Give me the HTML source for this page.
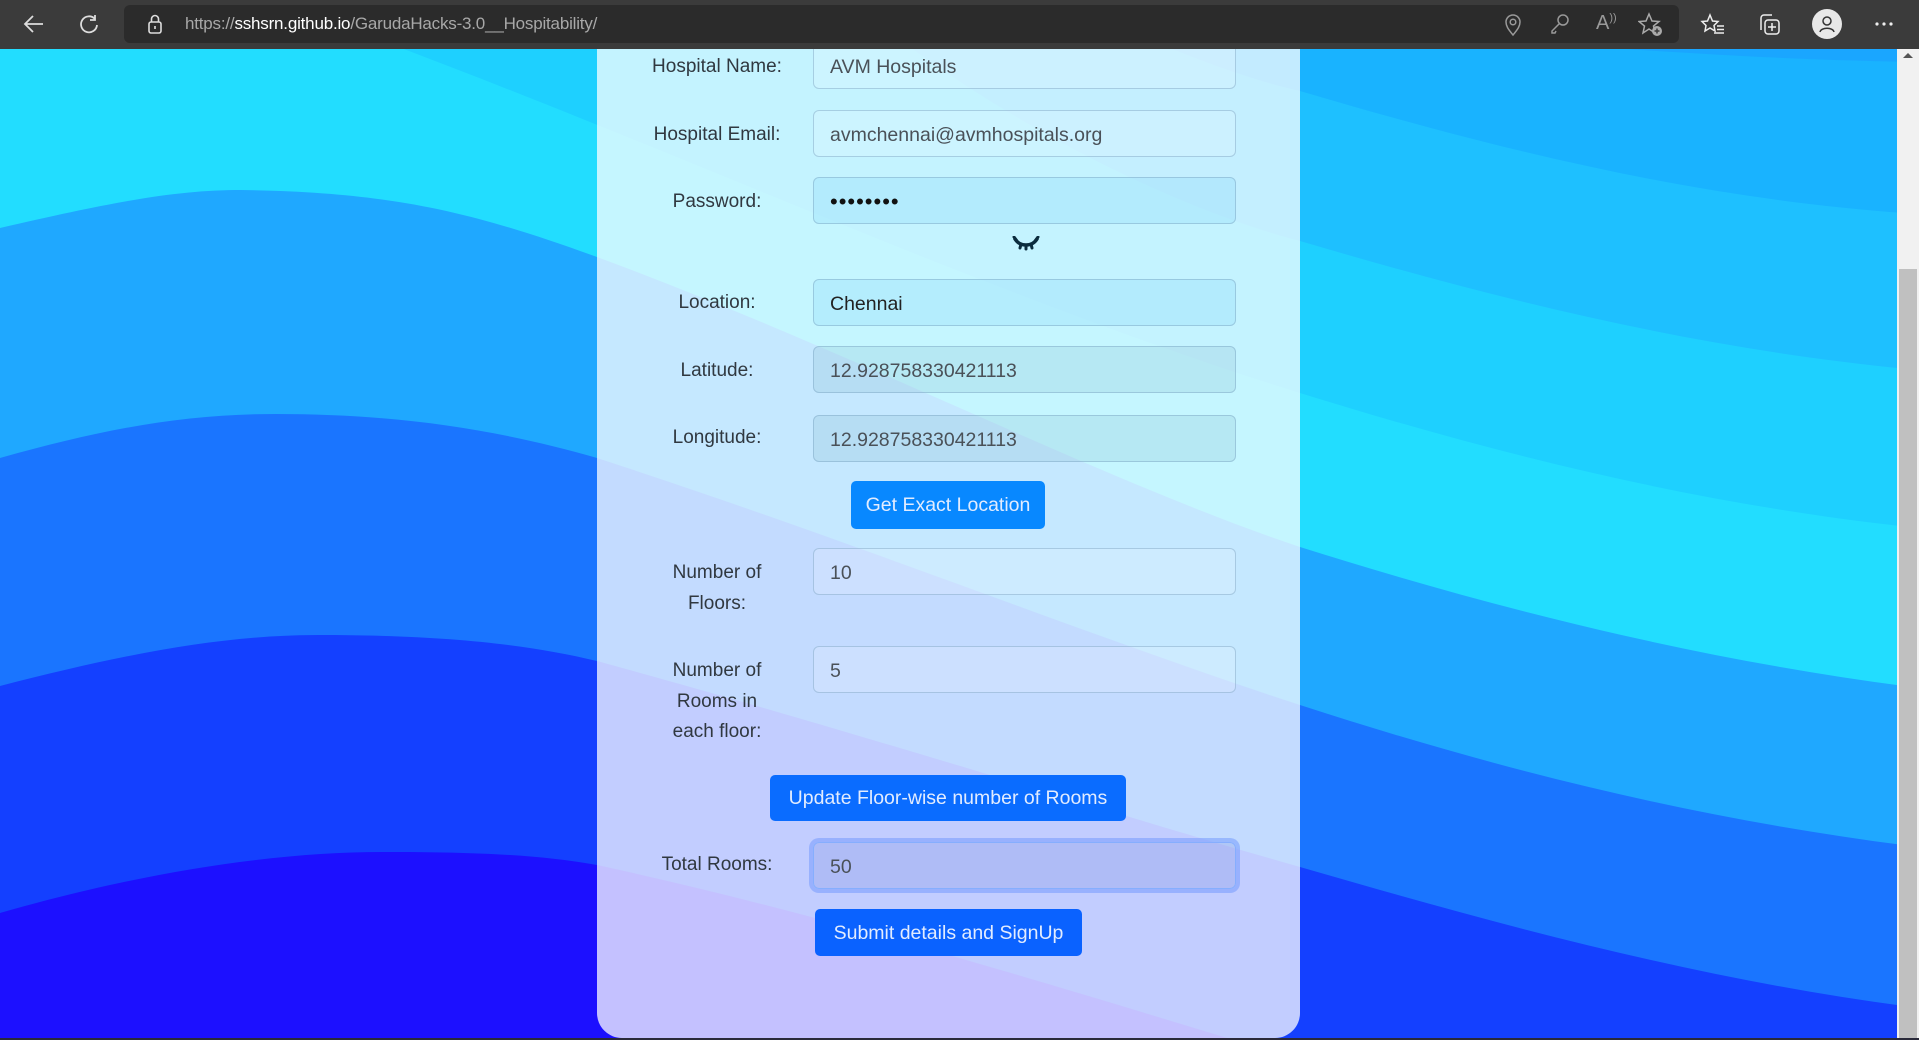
<!DOCTYPE html>
<html><head><meta charset="utf-8"><style>
*{margin:0;padding:0;box-sizing:border-box}
html,body{width:1919px;height:1040px;overflow:hidden;font-family:"Liberation Sans",sans-serif;position:relative}
#bar{position:absolute;left:0;top:0;width:1919px;height:49px;background:#3b3b3b}
#addr{position:absolute;left:124px;top:5px;width:1555px;height:38px;background:#2b2b2b;border-radius:6px}
#url{position:absolute;left:185px;top:14px;font-size:17px;color:#a8a8a8;letter-spacing:-0.2px}
#url b{font-weight:normal;color:#fff}
#bg{position:absolute;left:0;top:49px;display:block}
#card{position:absolute;left:597px;top:0;width:703px;height:1038px;background:rgba(255,255,255,0.74);border-radius:0 0 25px 25px}
.lbl{position:absolute;width:240px;left:597px;text-align:center;font-size:19px;line-height:30.5px;color:#303840}
.inp{position:absolute;left:813px;width:423px;height:47px;border:1px solid rgba(120,160,190,0.45);border-radius:6px;background:rgba(255,255,255,0.15);font-size:19.5px;color:#4a5158;padding-left:16px;line-height:48px}
.auto{background:rgba(150,220,250,0.35)}
.dis{background:rgba(130,180,200,0.22)}
.btn{position:absolute;border-radius:5px;color:#e2ecff;font-size:19.5px;text-align:center;line-height:48px}
#sb{position:absolute;left:1897px;top:49px;width:22px;height:991px;background:#f1f1f1}
#thumb{position:absolute;left:1899px;top:269px;width:18px;height:769px;background:#c0c0c0}
</style></head><body>
<svg id="bg" width="1919" height="991" viewBox="0 49 1919 991">
<rect x="0" y="0" width="1919" height="1100" fill="#1c10ff"/>
<path d="M0,913 C150,870 280,852 383,852 C480,852 540,855 597,865 C850,920 1100,1000 1300,1060 L1919,1200 L1919,0 L0,0Z" fill="#1440ff"/>
<path d="M0,686 C120,655 220,635 318,635 C450,635 530,645 597,661 C850,730 1100,810 1300,867 C1500,925 1700,980 1919,1008 L1919,0 L0,0Z" fill="#1a75ff"/>
<path d="M0,458 C100,430 180,414 276,414 C400,414 500,430 597,458 C850,540 1100,640 1300,705 C1500,770 1700,820 1919,847 L1919,0 L0,0Z" fill="#1fa8ff"/>
<path d="M0,228 C120,200 180,190 241,190 C400,192 480,215 597,257 C850,350 1100,480 1300,547 C1500,610 1700,660 1919,688 L1919,0 L0,0Z" fill="#22ddff"/>
<path d="M380,40 C700,160 1000,300 1300,393 C1500,455 1700,505 1919,528 L1919,0 L380,0Z" fill="#1ed0ff"/>
<path d="M900,40 C1050,150 1200,215 1300,241 C1500,300 1700,350 1919,370 L1919,0 L900,0Z" fill="#1ec0ff"/>
<path d="M1150,40 C1200,60 1250,80 1300,91 C1500,150 1700,200 1919,214 L1919,0 L1150,0Z" fill="#19b3ff"/>
<path d="M1500,40 C1700,55 1800,60 1919,62 L1919,0 L1500,0Z" fill="#1aa6ff"/>
</svg>
<div id="card"></div>

<div class="lbl" style="top:52px">Hospital Name:</div>
<div class="inp" style="top:42px;height:47px">AVM Hospitals</div>
<div class="lbl" style="top:120px">Hospital Email:</div>
<div class="inp" style="top:110px">avmchennai@avmhospitals.org</div>
<div class="lbl" style="top:187px">Password:</div>
<div class="inp auto" style="top:177px;color:#111;font-size:22px;letter-spacing:1px">&#8226;&#8226;&#8226;&#8226;&#8226;&#8226;&#8226;&#8226;</div>
<svg style="position:absolute;left:1012px;top:236px" width="28" height="16" viewBox="0 0 28 16">
<path d="M3,3 C8,11 20,11 25,3" stroke="#0b2c3e" stroke-width="3.5" fill="none" stroke-linecap="round"/>
<path d="M2,1 L5,5 M26,1 L23,5 M9,8 L8,12 M14,9 L14,13 M19,8 L20,12" stroke="#0b2c3e" stroke-width="3" stroke-linecap="round"/>
</svg>
<div class="lbl" style="top:288px">Location:</div>
<div class="inp auto" style="top:279px;color:#222">Chennai</div>
<div class="lbl" style="top:356px">Latitude:</div>
<div class="inp dis" style="top:346px">12.928758330421113</div>
<div class="lbl" style="top:423px">Longitude:</div>
<div class="inp dis" style="top:415px">12.928758330421113</div>
<div class="btn" style="left:851px;top:481px;width:194px;height:48px;background:#0888ff">Get Exact Location</div>
<div class="lbl" style="top:558px">Number of<br>Floors:</div>
<div class="inp" style="top:548px">10</div>
<div class="lbl" style="top:656px">Number of<br>Rooms in<br>each floor:</div>
<div class="inp" style="top:646px">5</div>
<div class="btn" style="left:770px;top:775px;width:356px;height:46px;line-height:46px;background:#0a6cff">Update Floor-wise number of Rooms</div>
<div class="lbl" style="top:850px">Total Rooms:</div>
<div class="inp" style="top:842px;background:rgba(120,140,220,0.25);border-color:#86aefe;box-shadow:0 0 0 4px rgba(110,150,253,0.5)">50</div>
<div class="btn" style="left:815px;top:909px;width:267px;height:47px;background:#0a62ff">Submit details and SignUp</div>

<div id="sb"></div><div id="thumb"></div>
<div style="position:absolute;left:1903px;top:53px;width:0;height:0;border-left:5px solid transparent;border-right:5px solid transparent;border-bottom:5px solid #555"></div>
<div style="position:absolute;left:0;top:1038px;width:1919px;height:2px;background:#2a2a3a"></div>

<div id="bar"><div id="addr"></div>
<svg style="position:absolute;left:22px;top:13px" width="24" height="22" viewBox="0 0 24 22"><path d="M21,11 H3 M11,3 L3,11 L11,19" stroke="#ddd" stroke-width="1.8" fill="none"/></svg>
<svg style="position:absolute;left:77px;top:12px" width="24" height="24" viewBox="0 0 24 24"><path d="M18,7 A8,8 0 1 0 20,13 M18,3 V8 H13" stroke="#ddd" stroke-width="1.8" fill="none"/></svg>
<svg style="position:absolute;left:146px;top:13px" width="18" height="22" viewBox="0 0 18 22"><rect x="3" y="9" width="12" height="11" rx="2" stroke="#ddd" stroke-width="1.6" fill="none"/><path d="M5.5,9 V6 A3.5,3.5 0 0 1 12.5,6 V9" stroke="#ddd" stroke-width="1.6" fill="none"/><rect x="8.2" y="13" width="1.6" height="3" fill="#ddd"/></svg>
<div id="url">https://<b>sshsrn.github.io</b>/GarudaHacks-3.0__Hospitability/</div>
<svg style="position:absolute;left:1502px;top:13px" width="22" height="24" viewBox="0 0 22 24"><path d="M11,22 C6,16 4,13 4,9 A7,7 0 0 1 18,9 C18,13 16,16 11,22Z" stroke="#999" stroke-width="1.5" fill="none"/><circle cx="11" cy="9" r="2.8" stroke="#999" stroke-width="1.5" fill="none"/></svg>
<svg style="position:absolute;left:1549px;top:13px" width="22" height="22" viewBox="0 0 22 22"><circle cx="14" cy="7" r="5" stroke="#999" stroke-width="1.5" fill="none"/><path d="M10,11 L3,18 L3,20 L6,20 L7,18" stroke="#999" stroke-width="1.5" fill="none"/></svg>
<div style="position:absolute;left:1596px;top:12px;color:#999;font-size:20px">A<span style="font-size:11px;vertical-align:top">))</span></div>
<svg style="position:absolute;left:1638px;top:12px" width="26" height="26" viewBox="0 0 26 26"><path d="M11,2 L14,9 L21,9.5 L15.5,14 L17,21 L11,17 L5,21 L6.5,14 L1,9.5 L8,9Z" stroke="#aaa" stroke-width="1.5" fill="none"/><circle cx="19" cy="19" r="5" fill="#aaa"/><path d="M19,16.5 V21.5 M16.5,19 H21.5" stroke="#3b3b3b" stroke-width="1.5"/></svg>
<svg style="position:absolute;left:1700px;top:13px" width="26" height="24" viewBox="0 0 26 24"><path d="M10,2 L12.5,8 L18,8.5 L14,12.5 L15,18 L10,15 L5,18 L6,12.5 L2,8.5 L7.5,8Z" stroke="#eee" stroke-width="1.5" fill="none"/><path d="M17,13 H24 M17,16.5 H24 M14,20 H24" stroke="#eee" stroke-width="1.5"/></svg>
<svg style="position:absolute;left:1756px;top:12px" width="26" height="26" viewBox="0 0 26 26"><path d="M5,18 V6 A3,3 0 0 1 8,3 H16" stroke="#eee" stroke-width="1.5" fill="none"/><rect x="9" y="8" width="14" height="14" rx="3" stroke="#eee" stroke-width="1.5" fill="none"/><path d="M16,11 V19 M12,15 H20" stroke="#eee" stroke-width="1.5"/></svg>
<div style="position:absolute;left:1812px;top:9px;width:30px;height:30px;border-radius:50%;background:#e8e8e8"></div>
<svg style="position:absolute;left:1817px;top:14px" width="20" height="20" viewBox="0 0 20 20"><circle cx="10" cy="7" r="4" stroke="#333" stroke-width="1.5" fill="none"/><path d="M3,18 C4,13 16,13 17,18" stroke="#333" stroke-width="1.5" fill="none"/></svg>
<svg style="position:absolute;left:1874px;top:21px" width="20" height="6" viewBox="0 0 20 6"><circle cx="3" cy="3" r="1.6" fill="#eee"/><circle cx="10" cy="3" r="1.6" fill="#eee"/><circle cx="17" cy="3" r="1.6" fill="#eee"/></svg>
</div>
</body></html>
